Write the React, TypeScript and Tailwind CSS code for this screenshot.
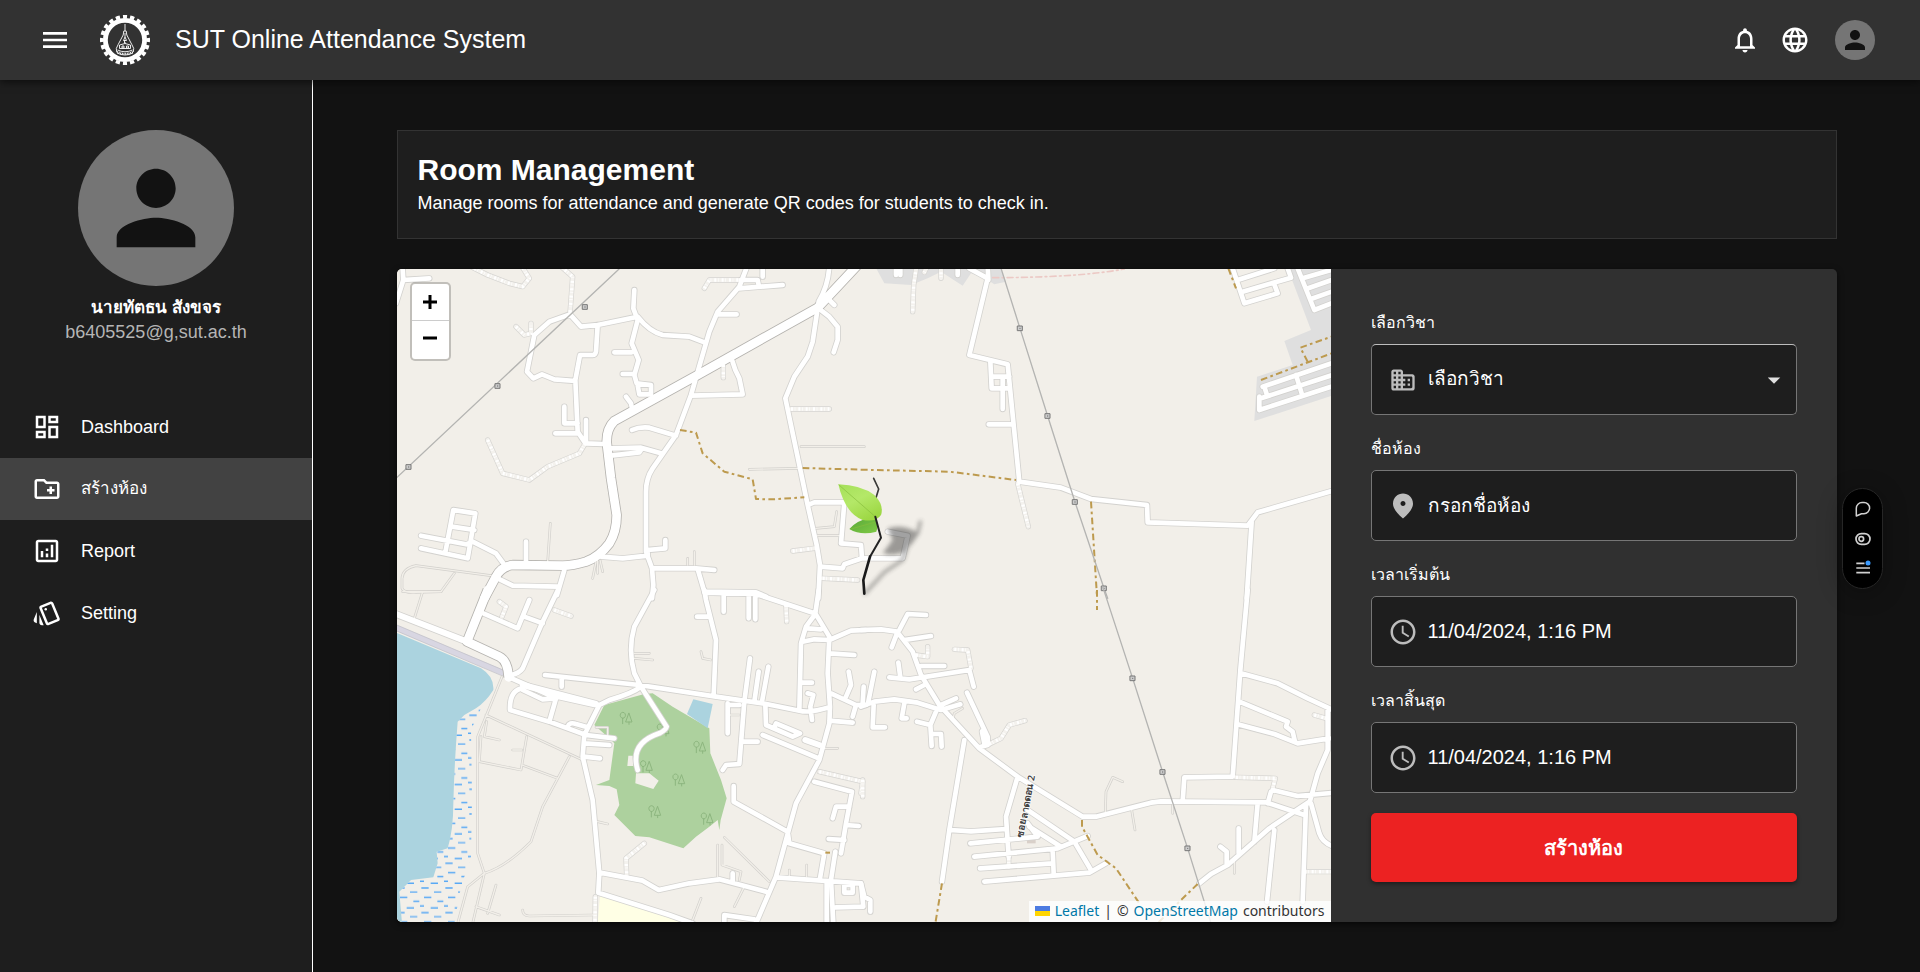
import { useState } from "react";
import type { ReactNode } from "react";
import {
  MdMenu,
  MdNotificationsNone,
  MdLanguage,
  MdPerson,
  MdOutlineDashboard,
  MdOutlineCreateNewFolder,
  MdOutlineAnalytics,
  MdOutlineStyle,
  MdAccessTime,
  MdArrowDropDown,
} from "react-icons/md";

/* ---------- Map drawing data: four tiles, each with its own origin ---------- */

type Tile = {
  at: string;
  major?: string;
  roads: string;
  wide?: string;
  lanes: string;
  tracks: string;
  paths: string;
  power: string;
  towers: number[][];
};

const TILES: Tile[] = [
  {
    at: "translate(-3 -12)",
    major:
      "M1385 0L1265 128L905 330L655 468Q632 490 632 530L645 640L662 750Q662 800 640 835Q610 875 570 890Q530 902 500 902L350 900Q315 905 300 935L265 1000",
    roads:
      "M20 10L22 45L100 40M22 45L0 115M415 210L460 170L522 148L555 185L605 180L725 155Q760 200 800 210L880 215L925 232M715 75L712 130L725 165L707 235L728 285L715 330L722 355L765 360V388H730L724 355M655 262H707M680 327H715M690 395L705 415L710 440M605 180L600 260Q598 270 590 270H552L538 345L545 500L568 535L620 537M415 210L393 320L412 340L438 328L475 343L538 348M1055 0L1030 65L965 140L940 200L885 390L840 510L770 610Q750 640 750 680V860L768 910L772 960L768 1000M1030 70L1160 60M1035 45H1085L1088 60M1100 0V35M965 148H1022M885 392L1040 388L1030 340L1018 315L1008 285M1300 0Q1298 60 1268 110L1250 230L1235 275L1195 335L1168 400L1210 600L1235 720L1262 840L1272 900L1267 1000M1265 128L1300 155L1325 185V225L1313 262M1285 90L1315 120M708 495Q730 485 760 488L840 512M645 550L735 548L795 565M645 572L730 562L738 550M505 425V475H545M478 505H545M570 465V535M75 812L210 838L230 830L300 865L322 895M75 850L215 880L238 745L172 735L148 862M168 785L235 795M390 830V890M615 875L680 880L755 872V855L808 850V825M505 915L483 990M305 940L350 962L485 965M770 910H900L955 915M905 912L925 980L1080 982L1110 995M1240 718L1255 712H1345L1335 835L1395 840L1398 880L1345 898L1340 910L1272 905M1395 880H1520L1535 812L1475 800",
    lanes:
      "M1060 613L1210 610M1215 545H1405M463 775L455 890M285 932L60 902Q20 910 18 940V970Q25 985 60 982L135 980L175 925M1260 790L1315 785L1322 740M1265 812H1330M895 860V900M875 880V900M590 940L600 890M620 920L612 885M605 925V880",
    tracks:
      "M215 0L275 30L340 55L380 65L400 40L375 0M490 0L530 35L522 145M360 185L385 210L405 205V175M275 525L320 625L400 645L455 605L550 565L568 535M1185 432H1300M925 70L940 45H1030M1190 858L1255 850M1280 940L1385 945M982 300V338",
    paths:
      "M852 495L900 503L920 565L985 620L1070 643L1080 702L1130 703L1225 697M1220 609L1395 614",
    power: "M682 0L0 640",
    towers: [[567, 126], [305, 363], [38, 606]],
  },
  {
    at: "translate(-3 963)",
    major: "M275 0L213 155L310 200Q335 212 338 262",
    roads:
      "M486 0L440 95L380 235Q370 250 345 255M340 262L460 315L595 345M262 70L365 115L400 30M385 80L440 100M775 0L715 110Q695 180 715 250L735 290L812 410Q810 420 790 430Q700 460 725 540M447 255L730 285L960 320L1100 340L1210 362Q1240 370 1300 352M497 262V290M735 290Q710 310 640 330L610 345L565 435L560 500L590 630L610 850L607 905M380 295Q340 300 342 360L460 395L570 435L655 445M380 300L440 328L480 325L460 395M515 410Q520 395 540 402L575 412M565 460L640 465M565 500L612 505M925 0L930 30L945 90L960 150L953 315M903 80H940M925 8L1080 12L1255 70M983 15V65M1058 20V85M1078 20V88M1268 0L1258 70L1300 140L1295 250L1302 350L1300 400L1270 510L1200 640L1140 860L1080 1000M1258 72L1230 110L1215 160L1210 360M1235 115L1275 118M1220 155L1255 148L1300 150L1365 122L1410 120M1300 190L1375 195M1215 278H1248M1235 310L1252 315L1243 350L1248 390M1358 245L1365 285L1350 320M1305 310L1380 345L1410 345M1380 345L1370 380M1300 392L1370 398M1062 205L1045 335L1030 522L990 525L980 540M1088 245L1075 335M1117 230L1098 335M995 340V430M1000 345H1030M1040 455H1085M1108 345L1110 405L1190 440L1212 430L1140 400L1135 412M1100 435L1268 505M1255 575L1368 605L1350 700L1335 790M1310 685L1320 650H1360M1350 705L1388 708M1298 747L1345 750M1013 588V635L1175 725L1180 760L1285 790L1272 865M612 848L740 872L788 900L880 880L970 868L1110 905M607 908L820 975L890 1000M1140 862L1395 880L1402 950L1320 952M1292 875V1000M1318 785L1305 870L1312 1000M1345 885H1370V908H1345ZM985 1000V975L1075 988M1010 850V875",
    wide: "M380 285L600 342M0 72L205 152M1228 450L1270 465",
    lanes:
      "M318 260L245 440V790L265 850L215 890L185 1000M270 375L560 510M265 850Q330 830 405 755L440 650L520 500M255 440L250 515L375 540L392 440M378 525L485 565M265 850L230 1000M300 885L275 970M240 950L310 975M350 480H378M272 395L265 440L310 450M380 960Q380 978 400 978L590 975M965 765V860M985 742L1120 875M978 765V825L1035 845L1030 870M1045 890L1015 950M915 925L890 990M80 5L55 85M20 5H135M715 190H760M715 205L770 210M915 185L920 205L945 210M605 695L635 702M1180 840V860M1232 825V860M600 412H635V440M1000 375H1030M1280 475H1325",
    tracks:
      "M310 35L330 50L318 80M475 60L525 78M745 760L690 805L692 855M598 920L597 1000M1170 45L1172 95M1270 545L1400 575L1395 610",
    paths: "M1288 788H1302",
    power: "",
    towers: [],
  },
  {
    at: "translate(1392 -12)",
    roads:
      "M325 10L380 40L325 270L440 298L455 450L475 650L600 668L690 702L858 720L860 772L1160 782L1190 742L1420 676M380 0L382 45M388 290L392 370H445M395 335H445M425 335V432M383 478H455M1172 770L1157 1000M1115 10L1150 115L1250 85L1240 58M1130 45L1240 10M1145 80L1290 38L1280 10M1310 10L1360 135L1420 112M1325 40L1420 12M1335 72L1420 42M1350 102L1420 77M1205 365L1420 292M1200 400L1420 328M1195 435L1420 362M1195 395V435M1210 365L1218 390M1305 330L1322 385M105 0V30M118 0V30M290 0V30",
    lanes: "",
    tracks: "M167 0L158 60L155 140M470 655L502 785M200 0L190 22M240 0V40",
    paths:
      "M0 614L265 620L465 645M690 710L708 995M1102 10L1125 70M1200 345L1420 262M1340 290L1318 248L1420 212",
    power: "M417 0L477 190L560 453L642 711L729 970L740 1000",
    towers: [[477, 190], [560, 453], [642, 711], [729, 970]],
  },
  {
    at: "translate(1392 963)",
    roads:
      "M0 120L60 118L108 125L155 185L180 255L235 345L355 475L470 560L665 680H705L870 638L900 634L1215 637L1330 675M115 120L140 72L195 75M108 130L92 172M130 150L210 138M180 228H250M85 262L145 268L325 240L338 290M112 218L118 262M165 298L190 285M0 350L40 335L100 328L170 338L240 360L298 343M240 345L285 325M40 245L22 335M8 290L5 340M38 345L35 412H72M130 340L122 385H137M225 365L208 405L212 468M168 395L208 405M212 432H240L242 470M318 308L380 440V465L355 472M310 450L265 720L243 875M470 560L435 680L443 800M268 720L330 724L435 717M328 760L530 740L500 700M340 800L590 775L680 738M357 835L575 820M370 875L685 848L735 820M575 780L578 850M500 660L640 755L690 840M505 710L600 770M1160 0L1138 240L1115 560L970 562L965 635M1140 250L1250 280L1340 325L1420 362M1135 335L1280 395L1275 410L1295 425L1302 455M1130 403L1240 432L1310 460L1405 445M1400 360V480L1370 550L1345 640M1235 600L1310 618L1420 608M1230 605L1220 640M1345 635L1225 715L1100 825L1050 852L1015 880M1190 640L1180 755M1240 720L1218 935M1335 645L1325 935M1350 640L1375 730Q1385 760 1420 770M1133 715V790M1078 770L1097 785V825M0 880L10 920L28 930V965",
    wide: "M365 425L372 460",
    lanes:
      "M733 665L735 605L755 562L785 575M812 660L822 720M935 640V670M1120 815V850M275 390L280 370L305 355",
    tracks:
      "M165 195L200 200V170M280 178L320 180L330 235M385 462L420 445L445 405L492 392M1125 562L1243 565L1235 595M1360 375L1395 385M1330 845H1410M443 805V830M5 570V620",
    paths: "M708 0V60M663 690V710L710 795L765 835L835 940M243 880L223 1000M1010 882L960 930L890 1000",
    power: "M725 -10L815 265L905 546L980 775L1050 1000",
    towers: [[815, 265], [905, 546], [980, 775]],
  },
];

const TREES = [
  [689, 385], [800, 420], [910, 472], [750, 530], [847, 570], [775, 665], [932, 687],
];

function MapDrawing() {
  return (
    <svg
      className="absolute inset-0 h-full w-full"
      viewBox="0 0 2802 1959"
      preserveAspectRatio="xMidYMid slice"
      fill="none"
      strokeLinecap="round"
      strokeLinejoin="round"
      aria-hidden="true"
    >
      <defs>
        <pattern id="marsh" width="72" height="74" patternUnits="userSpaceOnUse">
          <path
            d="M4 6h22M42 18h22M12 34h22M52 46h18M0 60h12M32 66h22"
            stroke="#56a8f5"
            strokeWidth="4"
            strokeLinecap="butt"
          />
        </pattern>
        <filter id="soft" x="-50%" y="-50%" width="200%" height="200%">
          <feGaussianBlur stdDeviation="6" />
        </filter>
        <linearGradient id="leafTop" x1="0" y1="0" x2="0.6" y2="1">
          <stop offset="0" stopColor="#a5e05a" />
          <stop offset="0.5" stopColor="#b4e868" />
          <stop offset="1" stopColor="#9ed845" />
        </linearGradient>
        <linearGradient id="leafLow" x1="0" y1="0" x2="1" y2="1">
          <stop offset="0" stopColor="#57a638" />
          <stop offset="1" stopColor="#7fca45" />
        </linearGradient>
      </defs>
      <rect width="2802" height="1959" fill="#f2efe9" />

      <g transform="translate(-3 963)">
        <path
          fill="#abd3df"
          d="M0 128L255 235Q295 260 292 300Q270 335 240 355L205 375L185 395Q175 520 172 640Q172 720 155 775L122 785L125 820L112 862L45 870L10 905L18 1000H0Z"
        />
        <path
          fill="url(#marsh)"
          d="M262 340L205 375L185 395Q175 520 172 640Q172 720 155 775L122 785L125 820L112 862L45 870L10 905L18 1000H175L195 890L225 800L228 620L225 420Z"
        />
        <path
          fill="#add19e"
          d="M745 312L770 310L830 350L940 415L943 490L975 570L992 625L974 690L970 720L965 690L940 710L900 740L862 775L760 742L718 738L655 675L670 645L662 598L640 588L600 585L640 570L655 460L640 445L595 405L625 345Z"
        />
        <path fill="#f2efe9" d="M720 550L760 550L788 572L772 597L718 580ZM697 497H710L712 528H694Z" />
        <path fill="#abd3df" d="M892 328L950 342L935 415L873 372Z" />
        <path fill="#ffffe5" d="M612 918L880 1000H605Z" />
        <path stroke="#d8d6e2" strokeWidth="17" d="M0 113L325 250" />
        <path stroke="#bdbcc4" strokeWidth="2" d="M0 122L322 259M0 104L326 242" />
        <g stroke="#8db67f" strokeWidth="3">
          {TREES.map(([x, y]) => (
            <path
              key={`${x}-${y}`}
              d={`M${x - 9} ${y + 16}v-16m0 0a8 9 0 1 1 1 0M${x + 10} ${y + 18}v-7m-9 0h18l-9-26z`}
            />
          ))}
        </g>
      </g>
      <g transform="translate(1392 -12)" fill="#dfdfdf">
        <path d="M1280 10H1420V390L1180 468L1188 335L1295 300L1270 228L1350 195Z" />
        <path d="M40 0L70 55L150 60L200 40L240 20L305 62L330 25L380 45L400 58L435 50L415 0Z" />
        <path
          fill="none"
          stroke="#ecc9c5"
          strokeWidth="5"
          strokeDasharray="18 10 5 10"
          d="M395 38Q650 38 790 12"
        />
      </g>
      <rect x="1890" y="1710" width="26" height="13" fill="#d9d0c9" />

      {TILES.map((t) => (
        <g key={t.at} transform={t.at}>
          <path d={t.lanes} stroke="#d2d0cc" strokeWidth="8" />
          <path d={t.tracks} stroke="#d6d5d2" strokeWidth="16" />
          <path d={t.roads} stroke="#d3d2cf" strokeWidth="19" />
          <path d={t.wide} stroke="#d3d2cf" strokeWidth="23" />
          <path d={t.major} stroke="#b5b3af" strokeWidth="31" strokeLinecap="butt" />
        </g>
      ))}
      {TILES.map((t) => (
        <g key={t.at} transform={t.at}>
          <path d={t.lanes} stroke="#f2efe9" strokeWidth="4" />
          <path d={t.tracks} stroke="#f4f2ee" strokeWidth="12" />
          <path d={t.tracks} stroke="#fff" strokeWidth="10" strokeDasharray="6 5 2 9" strokeLinecap="butt" />
          <path d={t.roads} stroke="#fff" strokeWidth="14" />
          <path d={t.wide} stroke="#fff" strokeWidth="18" />
          <path d={t.major} stroke="#fff" strokeWidth="26" />
        </g>
      ))}
      {TILES.map((t) => (
        <g key={t.at} transform={t.at}>
          <path
            d={t.paths}
            stroke="#bd9a4e"
            strokeWidth="6"
            strokeDasharray="20 10 8 10"
            strokeLinecap="butt"
          />
          <path d={t.power} stroke="#b4b4b2" strokeWidth="4" />
          {t.towers.map(([x, y]) => (
            <g key={`${x}-${y}`}>
              <rect x={x - 7} y={y - 7} width="14" height="14" fill="#ccc" stroke="#777" strokeWidth="3" />
              <circle cx={x} cy={y} r="2" fill="#777" />
            </g>
          ))}
        </g>
      ))}

      <text
        transform="translate(1878 1706) rotate(-79)"
        fill="#444"
        stroke="#fff"
        strokeWidth="4"
        paintOrder="stroke"
        fontSize="29"
        fontWeight="600"
        fontFamily='"Noto Sans", sans-serif'
      >
        ซอยลาดดอน 2
      </text>

      <g transform="translate(1272 588)">
        <g filter="url(#soft)" opacity="0.45">
          <path fill="#333" d="M185 265L215 225L200 190Q250 175 292 205Q280 235 245 262Q220 275 185 265Z" />
          <path stroke="#333" strokeWidth="9" d="M132 385L190 322L245 285L262 235L290 205L298 170" />
        </g>
        <path stroke="#3a3a38" strokeWidth="5" d="M158 40L173 72L165 98" />
        <path fill="url(#leafLow)" d="M85 192Q110 165 145 160L165 155Q172 185 166 200Q120 213 85 192Z" />
        <path fill="url(#leafTop)" d="M52 58Q120 60 160 90Q190 120 180 150Q166 172 125 165Q72 145 52 58Z" />
        <path stroke="#86bd3c" strokeWidth="2" d="M54 60L163 155M90 192L160 172" />
        <path stroke="#222" strokeWidth="6" d="M163 155L180 218L147 275" />
        <path stroke="#1a1a1a" strokeWidth="8" d="M147 275L127 345L130 386" />
      </g>
    </svg>
  );
}

/* ---------- Small drawings ---------- */

function Logo() {
  return (
    <svg className="size-[50px]" viewBox="0 0 50 50" fill="none" aria-hidden="true">
      <circle cx="25" cy="25" r="19.6" stroke="#fff" strokeWidth="4.8" />
      <circle
        cx="25"
        cy="25"
        r="23.2"
        stroke="#fff"
        strokeWidth="3.6"
        pathLength="40"
        strokeDasharray="1.15 0.85"
        strokeDashoffset="0.57"
        transform="rotate(-90 25 25)"
      />
      <g stroke="#fff" strokeWidth="0.9" strokeLinejoin="round">
        <path d="M25 9v7M23.8 16h2.4l.6 4 5 9.500q3 4 1.500 7.500M23.800 16l-.6 4-5 9.500q-3 4-1.500 7.500" />
        <path d="M25 18v4l1.500 3.500h-3L25 22M24.500 25v3h1.500M19.500 30q5.500-3 11 0v3.500h-11zM22 31h2v2h-2zM26.500 31h2v2h-2z" />
        <path d="M17.500 35q7.500 3.500 15 0M17 38q8 4 16 0" />
        <path d="M17 36.800q8 4 16 0" strokeWidth="2" strokeDasharray="0.9 0.8" />
      </g>
    </svg>
  );
}

function BuildingIcon() {
  return (
    <svg className="size-[28px]" viewBox="0 0 24 24" fill="currentColor" aria-hidden="true">
      <path d="M12 7V5c0-1.100-.9-2-2-2H4c-1.100 0-2 .9-2 2v14c0 1.100.9 2 2 2h16c1.100 0 2-.9 2-2V9c0-1.100-.9-2-2-2h-8zM6 19H4v-2h2v2zm0-4H4v-2h2v2zm0-4H4V9h2v2zm0-4H4V5h2v2zm4 12H8v-2h2v2zm0-4H8v-2h2v2zm0-4H8V9h2v2zm0-4H8V5h2v2zm9 12h-7v-2h2v-2h-2v-2h2v-2h-2V9h7c.55 0 1 .45 1 1v8c0 .55-.45 1-1 1zm-1-8h-2v2h2v-2zm0 4h-2v2h2v-2z" />
    </svg>
  );
}

function PinIcon() {
  return (
    <svg className="size-[30px]" viewBox="0 0 24 24" fill="currentColor" aria-hidden="true">
      <path d="M12 2c-4.200 0-8 3.220-8 8.200 0 3.320 2.670 7.250 8 11.800 5.330-4.550 8-8.480 8-11.800C20 5.220 16.200 2 12 2zm0 10c-1.100 0-2-.9-2-2s.9-2 2-2 2 .9 2 2-.9 2-2 2z" />
    </svg>
  );
}

function Flag() {
  return (
    <svg className="h-[10px] w-[15px]" viewBox="0 0 15 10" aria-hidden="true">
      <rect width="15" height="10" fill="#ffd500" />
      <rect width="15" height="5" fill="#4c7be1" />
    </svg>
  );
}

/* ---------- Page parts ---------- */

function Header() {
  return (
    <header className="relative z-10 flex h-20 items-center bg-[#323232] pr-[45px] pl-[39px] text-white shadow-[0_2px_8px_rgba(0,0,0,0.6)]">
      <button type="button" aria-label="Menu">
        <MdMenu className="size-8" />
      </button>
      <a href="#home" className="ml-[29px] flex items-center gap-[25px]">
        <Logo />
        <span className="text-[25px]">SUT Online Attendance System</span>
      </a>
      <div className="ml-auto flex items-center">
        <button type="button" aria-label="Notifications">
          <MdNotificationsNone className="size-[30px]" />
        </button>
        <button type="button" aria-label="Language" className="ml-5">
          <MdLanguage className="size-[30px]" />
        </button>
        <button
          type="button"
          aria-label="Account"
          className="ml-[25px] flex size-10 items-center justify-center rounded-full bg-[#757575] text-[#121212]"
        >
          <MdPerson className="size-[30px]" />
        </button>
      </div>
    </header>
  );
}

const NAV = [
  { label: "Dashboard", Icon: MdOutlineDashboard, style: "text-lg" },
  { label: "สร้างห้อง", Icon: MdOutlineCreateNewFolder, style: "bg-[#424242] text-[17px] font-medium", active: true },
  { label: "Report", Icon: MdOutlineAnalytics, style: "text-lg" },
  { label: "Setting", Icon: MdOutlineStyle, style: "text-lg" },
];

function Sidebar() {
  return (
    <aside className="w-[312px] shrink-0 bg-[#1e1e1e] pt-[50px]">
      <div className="flex flex-col items-center">
        <div className="flex size-[156px] items-center justify-center rounded-full bg-[#757575] text-[#121212]">
          <MdPerson className="size-[118px]" />
        </div>
        <p className="mt-[10px] text-[17px] leading-6 font-bold text-white">นายทัตธน สังขจร</p>
        <p className="text-lg leading-6 text-[#b5b5b5]">b6405525@g,sut.ac.th</p>
      </div>
      <nav className="mt-[52px]">
        {NAV.map(({ label, Icon, style, active }) => (
          <a
            key={label}
            href={`#${label}`}
            aria-current={active ? "page" : undefined}
            className={`flex h-[62px] items-center gap-[19px] pl-8 text-white ${style}`}
          >
            <Icon className="size-[30px]" />
            {label}
          </a>
        ))}
      </nav>
    </aside>
  );
}

function MapPanel() {
  return (
    <section aria-label="Map" className="relative min-w-0 flex-1 overflow-hidden bg-[#f2efe9]">
      <MapDrawing />
      <div className="absolute top-[13px] left-[13px] flex w-[41px] flex-col overflow-hidden rounded-[5px] border-2 border-black/20 bg-white bg-clip-padding text-black">
        <button type="button" aria-label="Zoom in" className="flex h-[37px] items-center justify-center border-b border-[#ccc]">
          <svg className="size-[14px]" viewBox="0 0 14 14" aria-hidden="true">
            <path d="M7 0v14M0 7h14" stroke="currentColor" strokeWidth="3" />
          </svg>
        </button>
        <button type="button" aria-label="Zoom out" className="flex h-[38px] items-center justify-center pb-1">
          <svg className="size-[14px]" viewBox="0 0 14 14" aria-hidden="true">
            <path d="M0 7h14" stroke="currentColor" strokeWidth="3" />
          </svg>
        </button>
      </div>
      <div className="absolute right-0 bottom-0 flex h-[21px] items-center gap-[5px] bg-white/80 px-[6px] pb-0.5 font-['Noto_Sans','Open_Sans',sans-serif] text-sm text-[#333]">
        <Flag />
        <a href="#leaflet" className="text-[#0078a8]">Leaflet</a>
        <span>|</span>
        <span>©</span>
        <a href="#osm" className="text-[#0078a8]">OpenStreetMap</a>
        <span>contributors</span>
      </div>
    </section>
  );
}

function Field({ id, label, icon, children, lit }: { id: string; label: string; icon: ReactNode; children: ReactNode; lit?: boolean }) {
  return (
    <div className="mb-5">
      <label htmlFor={id} className="mb-2 block text-base leading-[27px] font-medium text-white">
        {label}
      </label>
      <div
        className={
          lit
            ? "flex h-[71px] items-center rounded-[5px] border border-[#767676] border-t-[#bdbdbd] bg-[#1e1e1e] px-4 text-white"
            : "flex h-[71px] items-center rounded-[5px] border border-[#767676] bg-[#1e1e1e] px-4 text-white"
        }
      >
        <span className="flex w-[30px] justify-center text-[#bdbdbd]">{icon}</span>
        {children}
      </div>
    </div>
  );
}

const inputClass =
  "ml-[10px] h-full min-w-0 flex-1 bg-transparent text-white outline-none placeholder:text-white placeholder:opacity-100";

function RoomForm() {
  const [start, setStart] = useState("11/04/2024, 1:16 PM");
  const [end, setEnd] = useState("11/04/2024, 1:16 PM");
  return (
    <form className="w-[506px] shrink-0 bg-[#303030] p-10" onSubmit={(e) => e.preventDefault()}>
      <Field id="subject" label="เลือกวิชา" icon={<BuildingIcon />} lit>
        <select id="subject" className={`${inputClass} appearance-none text-[19px] font-medium`}>
          <option>เลือกวิชา</option>
        </select>
        <MdArrowDropDown className="-mr-[9px] size-[30px] text-[#e0e0e0]" />
      </Field>
      <Field id="room" label="ชื่อห้อง" icon={<PinIcon />}>
        <input id="room" type="text" placeholder="กรอกชื่อห้อง" className={`${inputClass} text-[19px] font-medium`} />
      </Field>
      <Field id="start" label="เวลาเริ่มต้น" icon={<MdAccessTime className="size-[30px]" />}>
        <input id="start" type="text" value={start} onChange={(e) => setStart(e.target.value)} className={`${inputClass} text-xl`} />
      </Field>
      <Field id="end" label="เวลาสิ้นสุด" icon={<MdAccessTime className="size-[30px]" />}>
        <input id="end" type="text" value={end} onChange={(e) => setEnd(e.target.value)} className={`${inputClass} text-xl`} />
      </Field>
      <button
        type="submit"
        className="h-[69px] w-full rounded-[5px] bg-[#ec2222] text-xl font-bold text-white shadow-[0_2px_4px_rgba(0,0,0,0.4)]"
      >
        สร้างห้อง
      </button>
    </form>
  );
}

function FloatingTools() {
  return (
    <div className="absolute top-[488px] right-[37px] z-20 flex h-[101px] w-[41px] flex-col items-center justify-between rounded-full border border-[#262626] bg-black py-3 text-[#d0d0d0] shadow-[0_4px_24px_rgba(0,0,0,0.3)]">
      <button type="button" aria-label="Comments">
        <svg className="size-4" viewBox="0 0 16 16" fill="none" stroke="currentColor" strokeWidth="1.500" aria-hidden="true">
          <path d="M1.300 15V7.200A5.700 5.700 0 0 1 7 1.500h2a5.600 5.600 0 0 1 0 11.200H6.500z" strokeLinejoin="round" />
        </svg>
      </button>
      <button type="button" aria-label="Toggle view">
        <svg className="size-4" viewBox="0 0 16 16" fill="none" stroke="currentColor" strokeWidth="1.700" aria-hidden="true">
          <rect x="1" y="2.600" width="14" height="10.800" rx="5.400" />
          <circle cx="6.300" cy="8" r="2.300" />
        </svg>
      </button>
      <button type="button" aria-label="Menu options">
        <svg className="size-4" viewBox="0 0 16 16" fill="none" stroke="currentColor" strokeWidth="1.700" aria-hidden="true">
          <path d="M1.300 3.300H9.500M1.300 8H15M1.300 12.700H15" />
          <circle cx="13" cy="3" r="2.500" fill="#3b9bff" stroke="none" />
        </svg>
      </button>
    </div>
  );
}

export default function App() {
  return (
    <div className="relative flex min-h-screen flex-col bg-[#121212] font-['Liberation_Sans',Arial,sans-serif] text-white">
      <Header />
      <div className="flex flex-1">
        <Sidebar />
        <main className="min-w-0 flex-1 border-l border-white px-12 pt-[50px] pb-12">
          <div className="mx-auto max-w-[1440px]">
            <section className="h-[109px] border border-[#333] bg-[#1e1e1e] px-5 pt-5">
              <h1 className="text-[30px] leading-[38px] font-bold">Room Management</h1>
              <p className="text-lg leading-7">
                Manage rooms for attendance and generate QR codes for students to check in.
              </p>
            </section>
            <div className="mt-[30px] flex overflow-hidden rounded-[5px] shadow-[0_2px_6px_rgba(0,0,0,0.6)]">
              <MapPanel />
              <RoomForm />
            </div>
          </div>
        </main>
      </div>
      <FloatingTools />
    </div>
  );
}
